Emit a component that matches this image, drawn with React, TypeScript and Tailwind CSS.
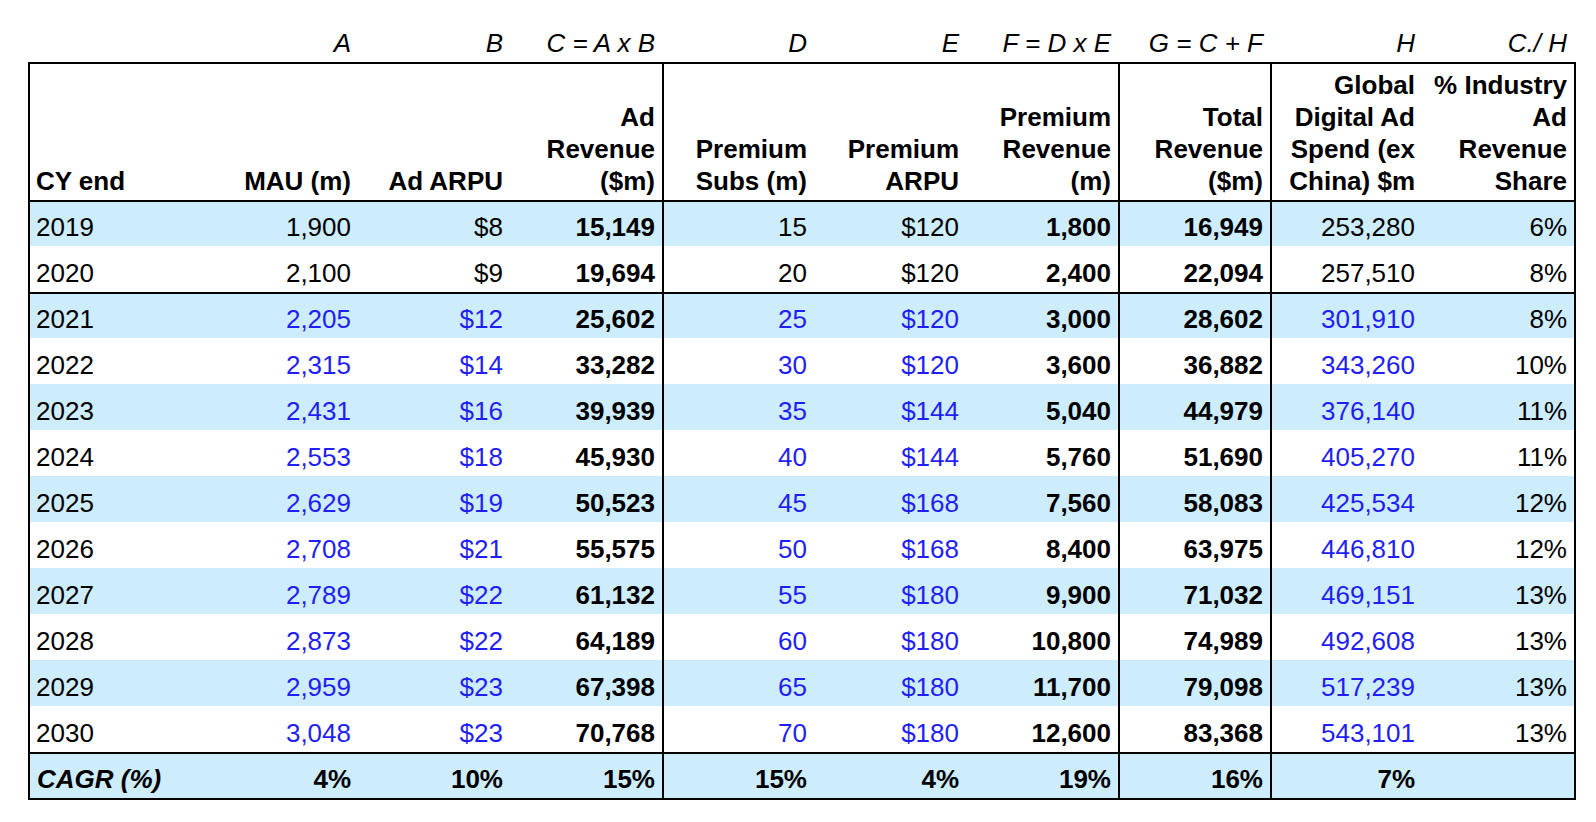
import React from "react";

const rows: string[][] = [
  ["2019", "1,900", "$8", "15,149", "15", "$120", "1,800", "16,949", "253,280", "6%"],
  ["2020", "2,100", "$9", "19,694", "20", "$120", "2,400", "22,094", "257,510", "8%"],
  ["2021", "2,205", "$12", "25,602", "25", "$120", "3,000", "28,602", "301,910", "8%"],
  ["2022", "2,315", "$14", "33,282", "30", "$120", "3,600", "36,882", "343,260", "10%"],
  ["2023", "2,431", "$16", "39,939", "35", "$144", "5,040", "44,979", "376,140", "11%"],
  ["2024", "2,553", "$18", "45,930", "40", "$144", "5,760", "51,690", "405,270", "11%"],
  ["2025", "2,629", "$19", "50,523", "45", "$168", "7,560", "58,083", "425,534", "12%"],
  ["2026", "2,708", "$21", "55,575", "50", "$168", "8,400", "63,975", "446,810", "12%"],
  ["2027", "2,789", "$22", "61,132", "55", "$180", "9,900", "71,032", "469,151", "13%"],
  ["2028", "2,873", "$22", "64,189", "60", "$180", "10,800", "74,989", "492,608", "13%"],
  ["2029", "2,959", "$23", "67,398", "65", "$180", "11,700", "79,098", "517,239", "13%"],
  ["2030", "3,048", "$23", "70,768", "70", "$180", "12,600", "83,368", "543,101", "13%"],
];

const rowHeights = ["h-[44px]", "h-[48px]", "h-[44px]", "h-[46px]", "h-[46px]", "h-[46px]", "h-[46px]", "h-[46px]", "h-[46px]", "h-[46px]", "h-[46px]", "h-[46px]"];

const letters = ["", "A", "B", "C = A x B", "D", "E", "F = D x E", "G = C + F", "H", "C./ H"];

const headers: React.ReactNode[] = [
  "CY end",
  "MAU (m)",
  "Ad ARPU",
  <>Ad<br />Revenue<br />($m)</>,
  <>Premium<br />Subs (m)</>,
  <>Premium<br />ARPU</>,
  <>Premium<br />Revenue<br />(m)</>,
  <>Total<br />Revenue<br />($m)</>,
  <>Global<br />Digital Ad<br />Spend (ex<br />China) $m</>,
  <>% Industry<br />Ad<br />Revenue<br />Share</>,
];

const cagr = ["CAGR (%)", "4%", "10%", "15%", "15%", "4%", "19%", "16%", "7%", ""];

const divider = (i: number) => i === 4 || i === 7 || i === 8;
const boldCol = (i: number) => i === 3 || i === 6 || i === 7;
const blueCol = (i: number) => i === 1 || i === 2 || i === 4 || i === 5 || i === 8;

export default function App() {
  return (
    <div className="min-h-[822px] w-[1596px] bg-white pt-[26px] font-['Liberation_Sans',Arial,sans-serif] text-[26px] leading-[32px] text-black">
      {/* letter row */}
      <div className="ml-[30px] grid h-[36px] grid-cols-[176px_repeat(9,152px)]">
        {letters.map((l, i) => (
          <div key={i} className="flex items-end justify-end whitespace-nowrap pb-[3px] pr-[7px] italic">
            {l}
          </div>
        ))}
      </div>

      <div className="ml-[28px] w-[1548px] border-2 border-black">
        {/* header */}
        <div className="grid h-[138px] grid-cols-[176px_repeat(9,152px)] border-b-2 border-black">
          {headers.map((h, i) => (
            <div
              key={i}
              className={`flex items-end whitespace-nowrap pb-[3px] font-bold ${i === 0 ? "justify-start pl-[6px]" : "justify-end pr-[7px] text-right"} ${divider(i) ? "border-l-2 border-black" : ""}`}
            >
              <div>{h}</div>
            </div>
          ))}
        </div>

        {/* data rows */}
        {rows.map((r, ri) => (
          <div
            key={ri}
            className={`grid grid-cols-[176px_repeat(9,152px)] ${rowHeights[ri]} ${ri % 2 === 0 ? "bg-[#cdecfc]" : "bg-white"} ${ri === 1 ? "border-b-2 border-black" : ""}`}
          >
            {r.map((c, i) => (
              <div
                key={i}
                className={`flex items-end whitespace-nowrap pb-[3px] ${i === 0 ? "justify-start pl-[6px]" : "justify-end pr-[7px]"} ${divider(i) ? "border-l-2 border-black" : ""} ${boldCol(i) ? "font-bold" : ""} ${ri >= 2 && blueCol(i) ? "text-[#1f1ff5]" : ""}`}
              >
                {c}
              </div>
            ))}
          </div>
        ))}

        {/* CAGR row */}
        <div className="grid h-[46px] grid-cols-[176px_repeat(9,152px)] border-t-2 border-black bg-[#cdecfc] font-bold">
          {cagr.map((c, i) => (
            <div
              key={i}
              className={`flex items-end whitespace-nowrap pb-[3px] ${i === 0 ? "justify-start pl-[7px] italic" : "justify-end pr-[7px]"} ${divider(i) ? "border-l-2 border-black" : ""}`}
            >
              {c}
            </div>
          ))}
        </div>
      </div>
    </div>
  );
}
